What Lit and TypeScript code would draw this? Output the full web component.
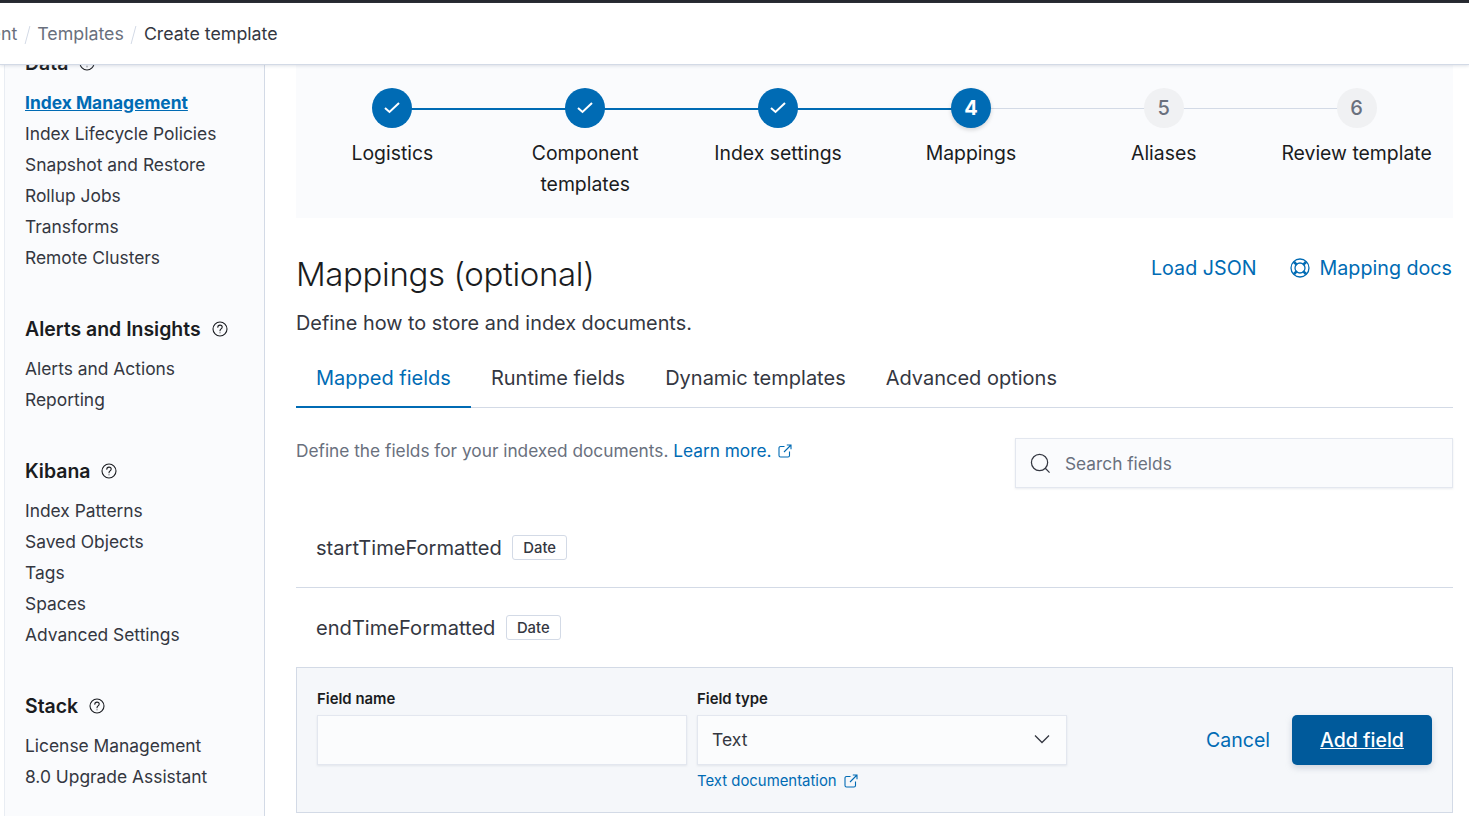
import { LitElement, css, html, svg } from 'lit';
import { customElement } from 'lit/decorators.js';

const helpIcon = (size = 16) => html`
  <svg class="help" width=${size} height=${size} viewBox="0 0 16 16" fill="none" stroke="#1a1c21" stroke-width="1.1">
    <circle cx="8" cy="8" r="7"></circle>
    <path d="M5.8 6.2c0-1.3 1-2.1 2.2-2.1s2.2.8 2.2 2c0 1.9-2.2 1.7-2.2 3.6" stroke-linecap="round"></path>
    <circle cx="8" cy="11.7" r=".5" fill="#1a1c21" stroke="none"></circle>
  </svg>`;

const popout = html`
  <svg class="popout" width="14" height="14" viewBox="0 0 14 14" fill="none" stroke="#006bb4" stroke-width="1.1">
    <path d="M11.5 7.5v4a1.5 1.5 0 0 1-1.5 1.5H2.500A1.500 1.500 0 0 1 1 11.500V4A1.500 1.500 0 0 1 2.500 2.500h4"></path>
    <path d="M6 8l7-7M8.800 1H13v4.200"></path>
  </svg>`;

const check = svg`<path d="M1 6l4.500 4L15 1" fill="none" stroke="#fff" stroke-width="2"></path>`;

const sidebar = [
  { title: 'Alerts and Insights', items: ['Alerts and Actions', 'Reporting'] },
  { title: 'Kibana', items: ['Index Patterns', 'Saved Objects', 'Tags', 'Spaces', 'Advanced Settings'] },
  { title: 'Stack', items: ['License Management', '8.0 Upgrade Assistant'] },
];

const steps = [
  { label: 'Logistics', state: 'done' },
  { label: 'Component templates', state: 'done' },
  { label: 'Index settings', state: 'done' },
  { label: 'Mappings', state: 'current', n: 4 },
  { label: 'Aliases', state: 'todo', n: 5 },
  { label: 'Review template', state: 'todo', n: 6 },
];

@customElement('app-root')
export class AppRoot extends LitElement {
  static styles = css`
    :host {
      display: block;
      height: 816px;
      overflow: hidden;
      font-family: Inter, 'Noto Sans', sans-serif;
      font-size: 18px;
      color: #343741;
      background: #fff;
    }
    a { color: #006bb4; text-decoration: none; }
    .top { height: 3px; background: #25282f; }
    header {
      position: relative;
      z-index: 2;
      height: 62px;
      background: #fff;
      border-bottom: 1px solid #d3dae6;
      box-sizing: border-box;
      box-shadow: 0 1px 3px rgba(152, 162, 179, 0.3);
      display: flex;
      align-items: center;
      overflow: hidden;
      white-space: nowrap;
      font-size: 17.800px;
      color: #69707d;
    }
    header .first { margin-left: -25px; }
    header .sep {
      width: 1px;
      height: 18px;
      margin: 3px 9.500px 0;
      background: #d3dae6;
      transform: skewX(-15deg);
    }
    header span { position: relative; top: -0.500px; }
    header .cur { color: #343741; }

    .body { display: flex; height: 751px; }
    .gutter { width: 5px; flex: none; border-right: 1px solid #e9edf3; box-sizing: border-box; }

    nav {
      width: 260px;
      flex: none;
      box-sizing: border-box;
      background: #fafbfd;
      border-right: 1px solid #d3dae6;
      padding-left: 20px;
      overflow: hidden;
      font-size: 17.400px;
    }
    nav .scroll { margin-top: -14px; }
    nav h3 {
      display: flex;
      align-items: center;
      gap: 11px;
      margin: 0 0 11.500px;
      height: 24px;
      font-size: 19.450px;
      font-weight: 600;
      color: #1a1c21;
    }
    nav ul { list-style: none; margin: 0 0 44.500px; padding: 0; }
    nav li { height: 31px; line-height: 31px; color: #343741; white-space: nowrap; }
    nav li.active { color: #006bb4; font-weight: 700; text-decoration: underline; }

    main { flex: 1; min-width: 0; padding: 0 16px 0 31px; overflow: hidden; }

    .steps {
      display: grid;
      grid-template-columns: repeat(6, 1fr);
      background: #fafbfd;
      height: 153px;
      padding-top: 23px;
      box-sizing: border-box;
    }
    .step {
      position: relative;
      display: flex;
      flex-direction: column;
      align-items: center;
      text-align: center;
      line-height: 31px;
      color: #1a1c21;
      font-size: 19.400px;
    }
    .step::before {
      content: '';
      position: absolute;
      top: 20px;
      left: 50%;
      width: 100%;
      height: 1px;
      background: #d3dae6;
    }
    .step.done::before { background: #006bb4; height: 2px; }
    .step:last-child::before { display: none; }
    .dot {
      position: relative;
      width: 40px;
      height: 40px;
      border-radius: 50%;
      margin-bottom: 10px;
      display: flex;
      align-items: center;
      justify-content: center;
      font-size: 20px;
      background: #f0f1f3;
      color: #69707d;
      font-weight: 500;
    }
    .done .dot, .current .dot { background: #006bb4; color: #fff; font-weight: 700; }
    .current .dot { box-shadow: 0 2px 4px rgba(0, 0, 0, 0.15); }
    .step .label { max-width: 170px; }

    .head { display: flex; justify-content: space-between; margin-top: 32px; height: 48px; }
    h1 {
      margin: 0;
      font-size: 33px;
      line-height: 48px;
      font-weight: 300;
      letter-spacing: -0.370px;
      color: #1a1c21;
    }
    .links { display: flex; gap: 33px; font-size: 19.700px; height: 36px; align-items: center; margin-right: 1px; }
    .links a { display: flex; align-items: center; gap: 10px; }
    .desc { margin: 9px 0 0; font-size: 19.850px; line-height: 32px; color: #343741; }

    .tabs {
      display: flex;
      height: 55px;
      margin-top: 14px;
      box-sizing: border-box;
      border-bottom: 1px solid #d3dae6;
      font-size: 20px;
    }
    .tab {
      padding: 0 20px;
      line-height: 50px;
      margin-bottom: -1px;
      height: 55px;
      box-sizing: border-box;
      color: #343741;
      white-space: nowrap;
    }
    .tab.on { color: #006bb4; border-bottom: 2px solid #006bb4; }

    .intro { display: flex; justify-content: space-between; margin-top: 30px; height: 50px; }
    .intro p { margin: 0; font-size: 17.270px; line-height: 26px; color: #69707d; white-space: nowrap; }
    .intro p a { display: inline-flex; align-items: center; gap: 7px; }
    .search {
      width: 438px;
      height: 50px;
      box-sizing: border-box;
      background: #fafbfd;
      border: 1px solid #e3e7ef;
      box-shadow: 0 1px 2px rgba(152, 162, 179, 0.2);
      display: flex;
      align-items: center;
      gap: 14px;
      padding-left: 14px;
      font-size: 17.300px;
      color: #69707d;
    }

    .field {
      display: flex;
      align-items: center;
      gap: 10.500px;
      height: 80px;
      padding-left: 20px;
      box-sizing: border-box;
      font-size: 20.100px;
      color: #343741;
      white-space: nowrap;
    }
    .field + .field { border-top: 1px solid #d3dae6; }
    .badge {
      font-size: 14.800px;
      font-weight: 500;
      height: 25px;
      line-height: 24px;
      padding: 0 10px;
      box-sizing: border-box;
      border: 1px solid #d3dae6;
      border-radius: 3px;
      background: #fff;
    }
    .fields { margin-top: 20px; }
    .fields .field:first-child { height: 79px; }

    .form {
      display: flex;
      height: 146px;
      box-sizing: border-box;
      border: 1px solid #d3dae6;
      background: #f5f7fa;
      padding: 20px 20px 0;
      gap: 10px;
    }
    .col { width: 370px; flex: none; }
    .col label {
      display: block;
      height: 27px;
      line-height: 22px;
      font-size: 14.900px;
      font-weight: 600;
      color: #1a1c21;
    }
    .box {
      height: 50px;
      box-sizing: border-box;
      background: #fbfcfd;
      border: 1px solid #e3e7ef;
      box-shadow: 0 1px 2px rgba(152, 162, 179, 0.2);
      display: flex;
      align-items: center;
      justify-content: space-between;
      padding: 0 16px 2px 14px;
      font-size: 17.500px;
    }
    .help-link {
      display: flex;
      align-items: center;
      gap: 7px;
      margin-top: 6px;
      font-size: 14.900px;
      line-height: 20px;
    }
    .actions {
      flex: 1;
      display: flex;
      justify-content: flex-end;
      gap: 22px;
      align-items: center;
      height: 50px;
      margin-top: 27px;
      font-size: 19.500px;
    }
    .btn {
      width: 140px;
      height: 50px;
      border-radius: 5px;
      background: #005a9b;
      color: #fff;
      font-weight: 500;
      text-decoration: underline;
      display: flex;
      align-items: center;
      justify-content: center;
      box-shadow: 0 3px 6px rgba(152, 162, 179, 0.4);
    }
  `;

  private renderStep(s: any) {
    return html`
      <div class="step ${s.state}">
        <div class="dot">
          ${s.state === 'done'
            ? html`<svg width="16" height="12" viewBox="0 0 16 12">${check}</svg>`
            : s.n}
        </div>
        <div class="label">${s.label}</div>
      </div>
    `;
  }

  render() {
    return html`
      <div class="top"></div>
      <header>
        <span class="first">ment</span><span class="sep"></span>
        <span>Templates</span><span class="sep"></span>
        <span class="cur">Create template</span>
      </header>
      <div class="body">
        <div class="gutter"></div>
        <nav>
          <div class="scroll">
            <h3>Data ${helpIcon()}</h3>
            <ul>
              <li class="active">Index Management</li>
              <li>Index Lifecycle Policies</li>
              <li>Snapshot and Restore</li>
              <li>Rollup Jobs</li>
              <li>Transforms</li>
              <li>Remote Clusters</li>
            </ul>
            ${sidebar.map(
              (g) => html`
                <h3>${g.title} ${helpIcon()}</h3>
                <ul>${g.items.map((i) => html`<li>${i}</li>`)}</ul>
              `
            )}
          </div>
        </nav>
        <main>
          <div class="steps">${steps.map((s) => this.renderStep(s))}</div>
          <div class="head">
            <h1>Mappings (optional)</h1>
            <div class="links">
              <a>Load JSON</a>
              <a>
                <svg width="20" height="20" viewBox="0 0 20 20" fill="none" stroke="#006bb4" stroke-width="1.300">
                  <circle cx="10" cy="10" r="9"></circle>
                  <circle cx="10" cy="10" r="5"></circle>
                  <path d="M3.200 4.300l3.300 2.900M4.300 3.200l2.900 3.300M16.800 4.300l-3.300 2.900M15.700 3.200l-2.900 3.300M3.200 15.700l3.300-2.900M4.300 16.800l2.900-3.300M16.800 15.700l-3.300-2.900M15.700 16.800l-2.900-3.300"></path>
                </svg>
                Mapping docs
              </a>
            </div>
          </div>
          <p class="desc">Define how to store and index documents.</p>
          <div class="tabs">
            <div class="tab on">Mapped fields</div>
            <div class="tab">Runtime fields</div>
            <div class="tab">Dynamic templates</div>
            <div class="tab">Advanced options</div>
          </div>
          <div class="intro">
            <p>Define the fields for your indexed documents. <a>Learn more. ${popout}</a></p>
            <div class="search">
              <svg width="21" height="21" viewBox="0 0 22 22" fill="none" stroke="#343741" stroke-width="1.300">
                <circle cx="10" cy="10" r="8.500"></circle>
                <path d="M16 16l4.500 4.500"></path>
              </svg>
              Search fields
            </div>
          </div>
          <div class="fields">
            <div class="field">startTimeFormatted <span class="badge">Date</span></div>
            <div class="field">endTimeFormatted <span class="badge">Date</span></div>
          </div>
          <div class="form">
            <div class="col">
              <label>Field name</label>
              <div class="box"></div>
            </div>
            <div class="col">
              <label>Field type</label>
              <div class="box">
                Text
                <svg width="16" height="10" viewBox="0 0 16 10" fill="none" stroke="#343741" stroke-width="1.300">
                  <path d="M1 1.500l7 7 7-7"></path>
                </svg>
              </div>
              <a class="help-link">Text documentation ${popout}</a>
            </div>
            <div class="actions">
              <a>Cancel</a>
              <a class="btn">Add field</a>
            </div>
          </div>
        </main>
      </div>
    `;
  }
}
